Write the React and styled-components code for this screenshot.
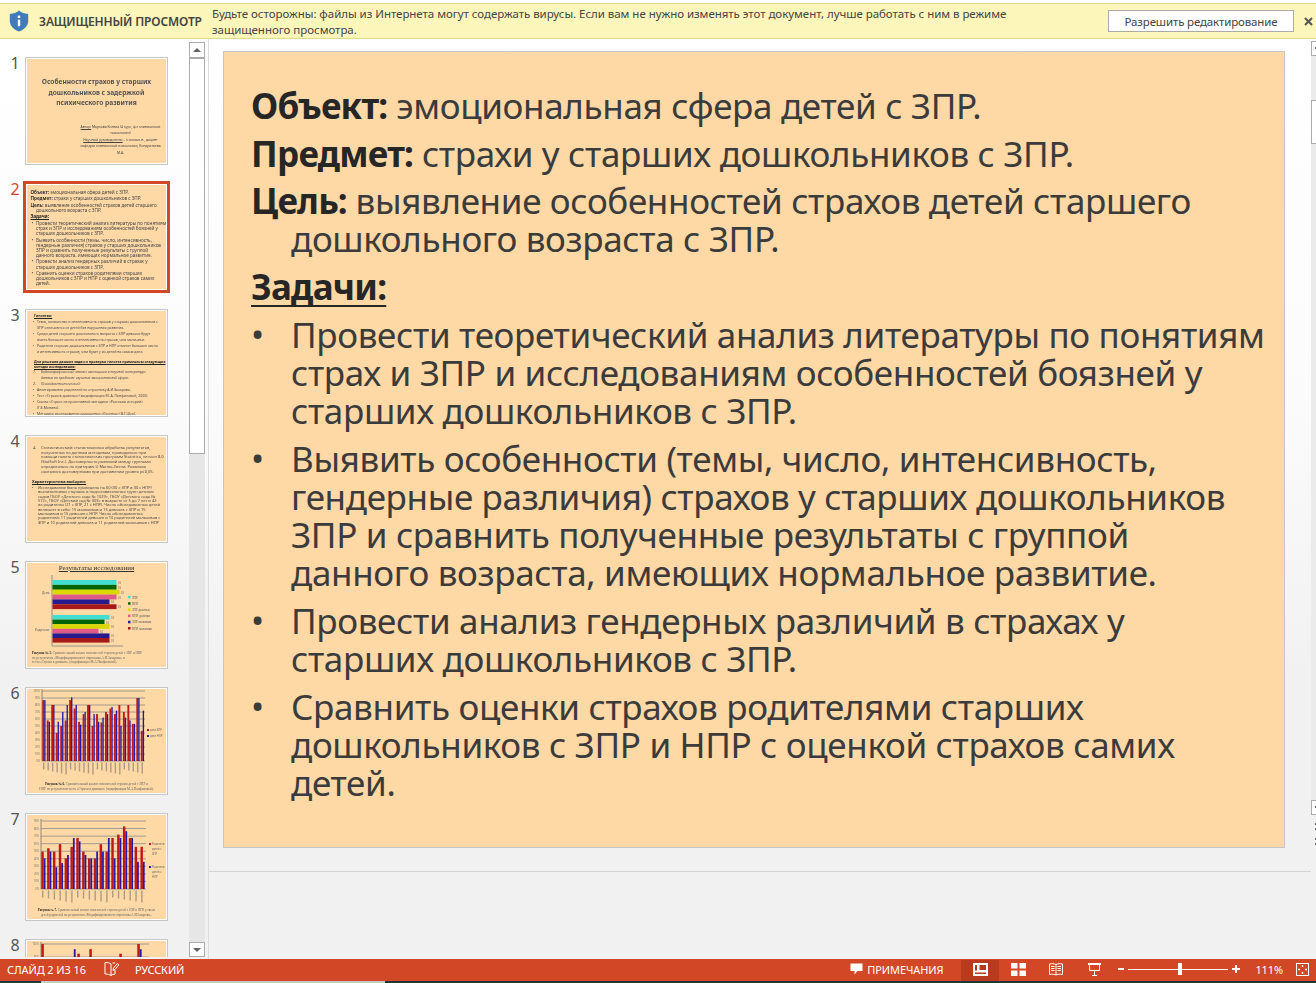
import React from "react";
import styled, { createGlobalStyle } from "styled-components";

const Global = createGlobalStyle`
  html, body { margin: 0; padding: 0; background: #fff; }
  * { box-sizing: border-box; }
  body { font-family: "Noto Sans", "Open Sans", sans-serif; overflow: hidden; }
`;

const Page = styled.div`
  width: 1316px;
  height: 983px;
  display: flex;
  flex-direction: column;
  overflow: hidden;
  background: #fff;
  padding-top: 3px;
`;

/* ---------- protected view notice ---------- */
const Notice = styled.div`
  flex: none;
  height: 36px;
  display: flex;
  align-items: center;
  background: #fdf6bb;
  border-top: 1px solid #e0d98b;
  border-bottom: 1px solid #e0d98b;
  padding-left: 9px;
  color: #444;
`;
const NoticeTitle = styled.div`
  font-size: 12px;
  font-weight: 600;
  color: #444;
  margin-left: 10px;
  width: 173px;
  white-space: nowrap;
  letter-spacing: -0.15px;
`;
const NoticeText = styled.div`
  font-size: 11.5px;
  line-height: 16px;
  width: 880px;
  padding-top: 2px;
  white-space: pre-line;
  letter-spacing: -0.04px;
  color: #444;
`;
const EditButton = styled.button`
  width: 186px;
  height: 22px;
  margin-left: 16px;
  background: #fff;
  border: 1px solid #aaa;
  color: #444;
  font-family: inherit;
  font-size: 11.5px;
  letter-spacing: -0.15px;
  padding: 1px 0 0;
`;
const CloseMark = styled.span`
  margin-left: 10px;
  display: flex;
`;

/* ---------- workspace ---------- */
const Workspace = styled.div`
  flex: 1;
  min-height: 0;
  display: flex;
  background: linear-gradient(180deg, #ffffff 0%, #fbfbfb 40%, #f1f1f1 70%, #f1f1f1 100%);
`;
const Sidebar = styled.div`
  flex: none;
  width: 209px;
  display: flex;
  padding-top: 3px;
  padding-right: 3px;
  padding-bottom: 2px;
  border-right: 1px solid #dcdcdc;
`;
const ThumbList = styled.div`
  flex: none;
  width: 189px;
  overflow: hidden;
  display: flex;
  flex-direction: column;
  gap: 18px;
  padding: 15px 0 0 0;
`;
const Scrollbar = styled.div`
  flex: none;
  width: 16px;
  display: flex;
  flex-direction: column;
  background: #e6e6e6;
`;
const ScrollButton = styled.div`
  flex: none;
  height: ${p => p.$h || 16}px;
  background: #fff;
  border: 1px solid #ababab;
  display: flex;
  align-items: center;
  justify-content: center;
  &::after {
    content: "";
    border-left: 4px solid transparent;
    border-right: 4px solid transparent;
    ${p => (p.$down ? "border-top: 4px solid #606060;" : "border-bottom: 4px solid #606060;")}
  }
`;
const ScrollThumb = styled.div`
  flex: none;
  height: ${p => p.$h}px;
  background: #fff;
  border: 1px solid #ababab;
`;
const ScrollFill = styled.div`
  flex: 1;
`;

const ThumbRow = styled.div`
  flex: none;
  display: flex;
  align-items: flex-start;
  height: 108px;
`;
const ThumbNum = styled.div`
  flex: none;
  width: ${p => (p.$active ? 23 : 25)}px;
  padding-left: 10.5px;
  margin-top: -2px;
  font-size: 16px;
  line-height: 17px;
  color: ${p => (p.$active ? "#d24726" : "#555")};
`;
const ThumbFrame = styled.div`
  flex: none;
  width: ${p => (p.$active ? 147 : 143)}px;
  height: ${p => (p.$active ? 112 : 108)}px;
  margin-top: ${p => (p.$active ? -2 : 0)}px;
  background: #fff;
  border: ${p => (p.$active ? "3px solid #d24726" : "1px solid #c6c6c6")};
  padding: 1px;
`;
const ThumbSlide = styled.div`
  width: 100%;
  height: 100%;
  background: #fed8a5;
  overflow: hidden;
  color: #4a4a4a;
  padding: ${p => p.$pad || "0"};
  filter: blur(0.35px);
`;
const TinyTitle = styled.div`
  margin: 18px 0 0;
  font-size: 6.6px;
  line-height: 10.5px;
  font-weight: 700;
  text-align: center;
  color: #555;
  white-space: pre;
`;
const TinyAuthor = styled.div`
  margin: 15px 2px 0 50px;
  font-size: 3.4px;
  line-height: 6.6px;
  text-align: center;
  color: #444;
  white-space: pre;
`;
const TinyBlock = styled.div`
  font-size: ${p => p.$size || 4.4}px;
  line-height: ${p => p.$lh || 5.1}px;
  color: #4a4a4a;
  letter-spacing: ${p => p.$ls || 0}px;
  white-space: pre;
`;
const TinyLine = styled.div`
  margin-top: ${p => p.$mt || 0}px;
  padding-left: ${p => p.$pl || 0}px;
  white-space: pre;
  b { color: #333; }
`;
const TinyHead = styled.div`
  font-weight: 700;
  text-decoration: underline;
  color: #222;
  white-space: pre;
  line-height: ${p => (p.$lh ? `${p.$lh}px` : "inherit")};
  margin-top: ${p => p.$mt || 0}px;
  margin-left: ${p => p.$ml || 0}px;
`;
const TinyItem = styled.div`
  position: relative;
  padding-left: ${p => p.$pl || 6}px;
  margin-top: ${p => p.$mt || 0}px;
  line-height: ${p => (p.$lh ? `${p.$lh}px` : "inherit")};
  font-style: ${p => (p.$it ? "italic" : "normal")};
  white-space: pre;
  &::before {
    content: "${p => p.$mark || "•"}";
    position: absolute;
    left: ${p => p.$ml || 1}px;
  }
`;
const ChartCaption = styled.div`
  font-family: "Liberation Serif", serif;
  font-size: ${p => p.$size || 3.5}px;
  line-height: ${p => p.$lh || 4.6}px;
  color: #666;
  white-space: pre;
  text-align: ${p => p.$align || "left"};
  padding: ${p => p.$pad || "0 8px"};
`;
const CaptionStrong = styled.span`
  font-weight: 700;
  color: #222;
`;
const ResultTitle = styled.div`
  font-family: "Liberation Serif", serif;
  font-size: 7px;
  line-height: 9px;
  padding-top: 1px;
  text-align: center;
  text-decoration: underline;
  color: #333;
`;
const ChartSvg = styled.svg`
  display: block;
`;

/* ---------- main slide ---------- */
const Stage = styled.div`
  flex: 1;
  min-width: 0;
  display: flex;
`;
const StageInner = styled.div`
  flex: 1;
  min-width: 0;
  padding: 12px 0 0 14px;
  display: flex;
  flex-direction: column;
`;
const SlideSheet = styled.div`
  flex: none;
  width: 1062px;
  height: 797px;
  background: #fed8a5;
  border: 1px solid #c6c6c6;
  padding: 35px 0 0 27px;
  color: #3b3b3b;
  font-size: 35px;
  line-height: 38.2px;
  letter-spacing: -0.34px;
`;
const Para = styled.div`
  padding-left: 40px;
  text-indent: -40px;
  margin-bottom: 9.4px;
  white-space: pre-line;
`;
const Strong = styled.b`
  font-weight: 700;
  color: #262626;
  letter-spacing: -0.75px;
`;
const Underlined = styled(Strong)`
  text-decoration: underline;
  text-decoration-thickness: 2px;
  text-underline-offset: 5px;
`;
const Bullet = styled.div`
  padding-left: 40px;
  margin-bottom: 9.5px;
  white-space: pre-line;
  position: relative;
  &::before {
    content: "•";
    position: absolute;
    left: 0;
    top: -1px;
  }
`;
const NotesPane = styled.div`
  margin-top: 23px;
  height: 0;
  border-top: 1px solid #d4d4d4;
  margin-left: -14px;
`;
const RightBar = styled.div`
  flex: none;
  width: 5px;
  padding-top: 2px;
  display: flex;
  flex-direction: column;
`;
const RightButton = styled.div`
  flex: none;
  height: 15px;
  background: #fff;
  border: 1px solid #ababab;
  border-right: none;
  &::after {
    content: "";
    display: block;
    width: 2px;
    height: 2px;
    background: #606060;
    margin: 5px 0 0 3px;
  }
`;
const RightTrack = styled.div`
  flex: none;
  height: ${p => p.$h}px;
  background: #ebebeb;
`;
const RightThumb = styled.div`
  flex: none;
  height: ${p => p.$h}px;
  background: #fff;
  border: 1px solid #ababab;
  border-right: none;
`;
const RightDots = styled.div`
  flex: none;
  margin: ${p => p.$mt}px 0 0 4px;
  width: 1px;
  height: 2px;
  background: #666;
  box-shadow: 0 5px 0 #666;
`;

/* ---------- status bar ---------- */
const StatusBar = styled.div`
  flex: none;
  height: 22px;
  background: #d24726;
  color: #fff;
  display: flex;
  align-items: center;
  font-size: 11px;
  letter-spacing: -0.1px;
`;
const StatusLabel = styled.span`
  margin-left: ${p => p.$ml || 0}px;
  padding-bottom: 2px;
  white-space: nowrap;
`;
const StatusIcon = styled.span`
  flex: none;
  display: flex;
  padding-bottom: ${p => (p.$flush ? 0 : 2)}px;
  margin-left: ${p => p.$ml || 0}px;
`;
const ViewButton = styled.div`
  flex: none;
  width: 38px;
  height: 21px;
  padding-bottom: 3px;
  display: flex;
  align-items: center;
  justify-content: center;
  background: ${p => (p.$active ? "#b83b1d" : "transparent")};
  margin-top: 1px;
`;
const ZoomMark = styled.span`
  flex: none;
  position: relative;
  width: ${p => p.$w}px;
  height: 2px;
  background: #fff;
  margin-top: -2px;
  margin-left: ${p => p.$ml || 0}px;
  ${p => p.$plus && `
    &::after {
      content: "";
      position: absolute;
      left: ${(p.$w - 2) / 2}px;
      top: -3px;
      width: 2px;
      height: 8px;
      background: #fff;
    }
  `}
`;
const ZoomTrack = styled.div`
  flex: none;
  position: relative;
  width: 100px;
  height: 1px;
  background: #fff;
  margin-top: -2px;
  margin-left: 4px;
`;
const ZoomKnob = styled.div`
  position: absolute;
  left: 50px;
  top: -6px;
  width: 4px;
  height: 12px;
  background: #fff;
`;
const BottomEdge = styled.div`
  flex: none;
  height: 2px;
  display: flex;
  background: #22343a;
`;
const EdgePart = styled.div`
  flex: none;
  width: ${p => p.$w}px;
  background: ${p => p.$c};
`;

/* ---------- drawings ---------- */
const Shield = () => (
  <svg width="20" height="22" viewBox="0 0 20 22">
    <path d="M10 0.5 C7.5 2.6 4.5 3.7 0.8 3.9 V10.5 C0.8 15.8 4.4 19.5 10 21.6 C15.6 19.5 19.2 15.8 19.2 10.5 V3.9 C15.5 3.7 12.5 2.6 10 0.5Z" fill="#3f7cba" />
    <rect x="8.8" y="5.6" width="2.4" height="2.4" fill="#fff" />
    <rect x="8.8" y="9.6" width="2.4" height="6.6" fill="#fff" />
  </svg>
);
const CloseIcon = () => (
  <svg width="9" height="9" viewBox="0 0 9 9">
    <path d="M1 1 L8 8 M8 1 L1 8" stroke="#555" strokeWidth="2" />
  </svg>
);
const NoteIcon = () => (
  <svg width="15" height="16" viewBox="0 0 15 16" fill="none" stroke="#fff" strokeWidth="1">
    <path d="M7 3 C5.5 1.8 3.5 1.5 1 1.5 V13 C3.5 13 5.5 13.4 7 14.5 V3Z" />
    <path d="M7 14.5 C8.2 13.6 9.4 13.2 11 13 V9" />
    <path d="M8.5 2 H11" />
    <path d="M9 9.5 L9.5 7 L13.3 2.5 L14.8 3.8 L11 8.5Z" />
  </svg>
);
const CommentIcon = () => (
  <svg width="13" height="12" viewBox="0 0 13 12">
    <path d="M0.5 0.5 H12.5 V8 H7.5 L4.5 11.5 V8 H0.5Z" fill="#fff" />
  </svg>
);
const NormalIcon = () => (
  <svg width="15" height="13" viewBox="0 0 15 13">
    <path d="M0 0 H15 V13 H0Z M6.5 2 V7 H13 V2Z M2 9.5 V11 H13 V9.5Z M2 2 V7.5 H4 V2Z" fill="#fff" fillRule="evenodd" />
  </svg>
);
const SorterIcon = () => (
  <svg width="15" height="13" viewBox="0 0 15 13" fill="#fff">
    <rect x="0" y="0" width="6.5" height="5.5" />
    <rect x="8.5" y="0" width="6.5" height="5.5" />
    <rect x="0" y="7.5" width="6.5" height="5.5" />
    <rect x="8.5" y="7.5" width="6.5" height="5.5" />
  </svg>
);
const ReadingIcon = () => (
  <svg width="14" height="13" viewBox="0 0 14 13" fill="none" stroke="#fff" strokeWidth="1">
    <path d="M0.5 1 C2.5 0.5 5 0.5 7 1.5 C9 0.5 11.5 0.5 13.5 1 V11.5 C11.5 11 9 11 7 12 C5 11 2.5 11 0.5 11.5Z" />
    <path d="M7 1.5 V12 M2 3.5 H5.5 M2 5.5 H5.5 M2 7.5 H5.5 M8.5 3.5 H12 M8.5 5.5 H12 M8.5 7.5 H12" />
  </svg>
);
const ShowIcon = () => (
  <svg width="13" height="13" viewBox="0 0 13 13" fill="none" stroke="#fff" strokeWidth="1">
    <path d="M0 1 H13" strokeWidth="2" />
    <path d="M1.5 1.5 V7.5 H11.5 V1.5" />
    <path d="M6.5 7.5 V12.5 M4 12.5 H9" />
  </svg>
);
const FitIcon = () => (
  <svg width="13" height="13" viewBox="0 0 13 13" fill="none" stroke="#fff" strokeWidth="1">
    <rect x="0.5" y="0.5" width="12" height="12" />
    <path d="M6.5 2 V4 M6.5 9 V11 M2 6.5 H4 M9 6.5 H11" strokeWidth="1.4" />
  </svg>
);

/* ---------- charts ---------- */
const BAR_COLORS = ["#40ddd0", "#006400", "#d9d900", "#e05a88", "#251b8f", "#a81818"];

const ResultsChart = () => {
  const top = [64, 64, 67, 64, 57, 64];
  const bottom = [57, 52, 57, 46, 57, 57];
  const legend = ["ЗПР", "НПР", "ЗПР девочки", "НПР девочки", "ЗПР мальчики", "НПР мальчики"];
  return (
    <ChartSvg width="139" height="78" viewBox="0 0 139 78">
      <path d="M25 2 V73 H96" stroke="#888" strokeWidth="0.9" fill="none" />
      {top.map((w, i) => (
        <g key={i}>
          <rect x="25.5" y={7 + i * 4.85} width={w} height="4.85" fill={BAR_COLORS[i]} />
          <text x={w + 27} y={11 + i * 4.85} fontSize="3" fill="#666" fontFamily="Liberation Serif">18</text>
        </g>
      ))}
      {bottom.map((w, i) => (
        <g key={i}>
          <rect x="25.5" y={42 + i * 4.6} width={w} height="4.6" fill={BAR_COLORS[i]} />
          <text x={w + 27} y={46 + i * 4.6} fontSize="3" fill="#666" fontFamily="Liberation Serif">18</text>
        </g>
      ))}
      <text x="15" y="21" fontSize="3.5" fill="#555" fontFamily="Liberation Serif">Дети</text>
      <text x="8" y="58" fontSize="3.5" fill="#555" fontFamily="Liberation Serif">Родители</text>
      {legend.map((t, i) => (
        <g key={t}>
          <rect x="101" y={23 + i * 6.2} width="2.5" height="2.5" fill={BAR_COLORS[i]} />
          <text x="105" y={25.5 + i * 6.2} fontSize="3.2" fill="#555" fontFamily="Liberation Serif">{t}</text>
        </g>
      ))}
    </ChartSvg>
  );
};

const BarChart = ({ red, blue, lines, left, top, right, bottom, height, legend, labels, unit = 10 }) => {
  const plotH = bottom - top;
  const step = (right - left) / red.length;
  return (
    <ChartSvg width="139" height={height} viewBox={`0 0 139 ${height}`}>
      {Array.from({ length: lines + 1 }).map((_, i) => (
        <line key={i} x1={left} x2={right} y1={top + (plotH * i) / lines} y2={top + (plotH * i) / lines} stroke="#8c8c8c" strokeWidth="0.8" />
      ))}
      {Array.from({ length: lines + 1 }).map((_, i) => (
        <text key={i} x={left - 2} y={bottom - (plotH * i) / lines + 1} fontSize="2.6" textAnchor="end" fill="#777">
          {`${i * unit}%`}
        </text>
      ))}
      <line x1={left} x2={left} y1={top - 2} y2={bottom} stroke="#777" strokeWidth="0.8" />
      {red.map((v, i) => (
        <g key={i}>
          <rect x={left + i * step + 0.3} y={bottom - (plotH * v) / 100} width={step * 0.42} height={(plotH * v) / 100} fill="#c01818" />
          <rect x={left + i * step + 0.3 + step * 0.42} y={bottom - (plotH * blue[i]) / 100} width={step * 0.3} height={(plotH * blue[i]) / 100} fill="#2418a8" />
          {labels && <rect x={left + i * step + 1} y={bottom + 1.5} width="1.4" height={7 + ((i * 7) % 6)} fill="#b09a80" />}
        </g>
      ))}
      {legend && legend.map((item, i) => (
        <g key={i}>
          <rect x={item.x} y={item.y - 2} width="2" height="2" fill={i ? "#2418a8" : "#b81818"} />
          {item.lines.map((t, j) => (
            <text key={j} x={item.x + 3} y={item.y + j * 5} fontSize="2.7" fill="#666">{t}</text>
          ))}
        </g>
      ))}
    </ChartSvg>
  );
};

const legendSix = [
  { x: 120, y: 42, lines: ["дети ЗПР"] },
  { x: 120, y: 48, lines: ["дети НПР"] },
];
const legendSeven = [
  { x: 122, y: 30, lines: ["Родители", "детей с", "ЗПР"] },
  { x: 122, y: 53, lines: ["Родители", "детей с", "НПР"] },
];

/* ---------- App ---------- */
export default function App() {
  return (
    <Page>
      <Global />
      <Notice>
        <Shield />
        <NoticeTitle>ЗАЩИЩЕННЫЙ ПРОСМОТР</NoticeTitle>
        <NoticeText>
          {"Будьте осторожны: файлы из Интернета могут содержать вирусы. Если вам не нужно изменять этот документ, лучше работать с ним в режиме\nзащищенного просмотра."}
        </NoticeText>
        <EditButton>Разрешить редактирование</EditButton>
        <CloseMark><CloseIcon /></CloseMark>
      </Notice>

      <Workspace>
        <Sidebar>
          <ThumbList>
            <ThumbRow>
              <ThumbNum>1</ThumbNum>
              <ThumbFrame>
                <ThumbSlide>
                  <TinyTitle>{"Особенности страхов у старших\nдошкольников с задержкой\nпсихического развития"}</TinyTitle>
                  <TinyAuthor>
                    <u>Автор:</u>{" Маркова Ксения (4 курс, ф-т клинической\nпсихологии)\n"}
                    <u>Научный руководитель:</u>{" – к.психол.н., доцент\nкафедры клинической психологии, Кондратьева\nМ.А."}
                  </TinyAuthor>
                </ThumbSlide>
              </ThumbFrame>
            </ThumbRow>

            <ThumbRow>
              <ThumbNum $active>2</ThumbNum>
              <ThumbFrame $active>
                <ThumbSlide $pad="5px 0 0 3.5px">
                  <TinyBlock $size={4.7} $lh={5.15} $ls={-0.046}>
                    <TinyLine><b>Объект:</b> эмоциональная сфера детей с ЗПР.</TinyLine>
                    <TinyLine $mt={1.25}><b>Предмет:</b> страхи у старших дошкольников с ЗПР.</TinyLine>
                    <TinyLine $mt={1.25}><b>Цель:</b> выявление особенностей страхов детей старшего</TinyLine>
                    <TinyLine $pl={5.4}>дошкольного возраста с ЗПР.</TinyLine>
                    <TinyHead $mt={1.25}>Задачи:</TinyHead>
                    <TinyItem $pl={5.4} $mt={1.25}>{"Провести теоретический анализ литературы по понятиям\nстрах и ЗПР и исследованиям особенностей боязней у\nстарших дошкольников с ЗПР."}</TinyItem>
                    <TinyItem $pl={5.4} $mt={1.25}>{"Выявить особенности (темы, число, интенсивность,\nгендерные различия) страхов у старших дошкольников\nЗПР и сравнить полученные результаты с группой\nданного возраста, имеющих нормальное развитие."}</TinyItem>
                    <TinyItem $pl={5.4} $mt={1.25}>{"Провести анализ гендерных различий в страхах у\nстарших дошкольников с ЗПР."}</TinyItem>
                    <TinyItem $pl={5.4} $mt={1.25}>{"Сравнить оценки страхов родителями старших\nдошкольников с ЗПР и НПР с оценкой страхов самих\nдетей."}</TinyItem>
                  </TinyBlock>
                </ThumbSlide>
              </ThumbFrame>
            </ThumbRow>

            <ThumbRow>
              <ThumbNum>3</ThumbNum>
              <ThumbFrame>
                <ThumbSlide $pad="2px 0 0 3px">
                  <TinyBlock $size={3.5} $lh={6}>
                    <TinyHead $ml={4}>Гипотезы:</TinyHead>
                    <TinyItem $pl={7} $ml={3}>{"Темы, количество и интенсивность страхов у старших дошкольников с\nЗПР отличаются от детей без нарушения развития."}</TinyItem>
                    <TinyItem $pl={7} $ml={3}>{"Среди детей старшего дошкольного возраста с ЗПР девочки будут\nиметь большее число и интенсивность страхов, чем мальчики."}</TinyItem>
                    <TinyItem $pl={7} $ml={3}>{"Родители старших дошкольников с ЗПР и НПР отметят большее число\nи интенсивность страхов, чем будет у их детей на самом деле."}</TinyItem>
                    <TinyHead $mt={4} $ml={4} $lh={5}>{"Для решения данных задач и проверки гипотез применены следующие\nметоды исследования:"}</TinyHead>
                    <TinyItem $it $mark="1." $pl={11} $ml={3}>{"Библиографический: анализ имеющихся в научной литературе\nданных по проблеме изучения эмоциональной сферы."}</TinyItem>
                    <TinyItem $it $mark="2." $pl={11} $ml={3}>Психодиагностический:</TinyItem>
                    <TinyItem $pl={7} $ml={3}>Анкетирование родителей по опроснику А.И.Захарова.</TinyItem>
                    <TinyItem $pl={7} $ml={3}>Тест «Страхи в домиках» (модификация М. А. Панфиловой, 2000).</TinyItem>
                    <TinyItem $pl={7} $ml={3}>{"Сказка «Страх» из проективной методики «Рассказы историй»\n(Г.Б.Монина)."}</TinyItem>
                    <TinyItem $pl={7} $ml={3}>Методика исследования самооценки «Лесенка» (В.Г.Щур).</TinyItem>
                  </TinyBlock>
                </ThumbSlide>
              </ThumbFrame>
            </ThumbRow>

            <ThumbRow>
              <ThumbNum>4</ThumbNum>
              <ThumbFrame>
                <ThumbSlide $pad="9px 0 0 3px">
                  <TinyBlock $size={4} $lh={4.7}>
                    <TinyItem $mark="4." $pl={11} $ml={3}>{"Статистический: статистическая обработка результатов,\nполученных по данным методикам, проводилась при\nпомощи пакета статистических программ Statistica, version 8.0\n(StatSoft Inc.). Достоверность различий между группами\nопределялась по критерию U Манна-Уитни. Различия\nсчитались достоверными при достижении уровня p≤0,05."}</TinyItem>
                    <TinyHead $mt={6} $ml={2}>Характеристика выборки:</TinyHead>
                    <TinyItem $pl={8} $ml={2} $mt={1} $lh={4.35}>{"Исследование было проведено на 60 (30 с ЗПР и 30 с НПР)\nвоспитанниках старших и подготовительных групп детских\nсадов ГБОУ «Детского сада № 1029», ГБОУ «Детского сада №\n572», ГБОУ «Детский сад № 303» в возрасте от 5 до 7 лет и 42\nих родителях (21 с ЗПР, 21 с НПР). Число обследованных детей\nвключает в себя: 15 мальчиков и 15 девочек с ЗПР и 15\nмальчиков и 15 девочек с НПР. Число обследованных\nродителей: 11 родителей девочек и 10 родителей мальчиков с\nЗПР и 10 родителей девочек и 11 родителей мальчиков с НПР"}</TinyItem>
                  </TinyBlock>
                </ThumbSlide>
              </ThumbFrame>
            </ThumbRow>

            <ThumbRow>
              <ThumbNum>5</ThumbNum>
              <ThumbFrame>
                <ThumbSlide>
                  <ResultTitle>Результаты исследования</ResultTitle>
                  <ResultsChart />
                  <ChartCaption $pad="0 0 0 5px" $size={3.3}><CaptionStrong>Рисунок № 5.</CaptionStrong>{" Сравнительный анализ показателей страхов детей с ЗПР и НПР\nпо результатам «Модифицированного опросника А.И.Захарова» и\nтеста «Страхи в домиках» (модификация М.А.Панфиловой)."}</ChartCaption>
                </ThumbSlide>
              </ThumbFrame>
            </ThumbRow>

            <ThumbRow>
              <ThumbNum>6</ThumbNum>
              <ThumbFrame>
                <ThumbSlide>
                  <BarChart
                    height={93}
                    left={15} right={118} top={2} bottom={72} lines={10}
                    legend={legendSix} labels
                    red={[87, 58, 80, 40, 50, 58, 87, 75, 56, 67, 80, 50, 67, 55, 70, 75, 67, 80, 70, 80, 53, 90, 43]}
                    blue={[87, 56, 80, 56, 70, 80, 91, 80, 52, 70, 80, 67, 56, 62, 67, 77, 72, 50, 62, 58, 53, 90, 72]}
                  />
                  <ChartCaption $pad="0 2px" $align="center" $lh={4.8} $size={3.3}><CaptionStrong>Рисунок № 6.</CaptionStrong>{" Сравнительный анализ показателей страхов детей с ЗПР и\nНПР по результатам теста «Страхи в домиках» (модификация М.А.Панфиловой)."}</ChartCaption>
                </ThumbSlide>
              </ThumbFrame>
            </ThumbRow>

            <ThumbRow>
              <ThumbNum>7</ThumbNum>
              <ThumbFrame>
                <ThumbSlide>
                  <BarChart
                    height={93}
                    left={14} right={119} top={6} bottom={74} lines={9}
                    legend={legendSeven} labels
                    red={[55, 60, 55, 66, 45, 62, 75, 55, 45, 45, 66, 55, 75, 80, 92, 75, 62, 62]}
                    blue={[45, 55, 32, 38, 50, 75, 70, 50, 45, 55, 55, 75, 45, 75, 85, 75, 40, 40]}
                  />
                  <ChartCaption $pad="0 2px" $align="center" $lh={4.6} $size={3.2}><CaptionStrong>Рисунок № 7.</CaptionStrong>{" Сравнительный анализ показателей страхов детей с ЗПР и НПР у своих\nдетей родителей по результатам «Модифицированного опросника А.И.Захарова»."}</ChartCaption>
                </ThumbSlide>
              </ThumbFrame>
            </ThumbRow>

            <ThumbRow>
              <ThumbNum>8</ThumbNum>
              <ThumbFrame>
                <ThumbSlide>
                  <BarChart
                    height={92}
                    left={14} right={122} top={3} bottom={68} lines={5} unit={20}
                    red={[100, 80, 60, 60, 60, 60, 85, 60, 92, 60, 80, 60, 60, 85, 80, 60, 100, 60]}
                    blue={[60, 60, 60, 60, 80, 92, 60, 60, 60, 60, 60, 60, 60, 60, 60, 60, 92, 60]}
                  />
                </ThumbSlide>
              </ThumbFrame>
            </ThumbRow>
          </ThumbList>
          <Scrollbar>
            <ScrollButton />
            <ScrollThumb $h={396} />
            <ScrollFill />
            <ScrollButton $down $h={15} />
          </Scrollbar>
        </Sidebar>

        <Stage>
          <StageInner>
            <SlideSheet>
              <Para><Strong>Объект:</Strong> эмоциональная сфера детей с ЗПР.</Para>
              <Para><Strong>Предмет:</Strong> страхи у старших дошкольников с ЗПР.</Para>
              <Para><Strong>Цель:</Strong> выявление особенностей страхов детей старшего{"\n"}дошкольного возраста с ЗПР.</Para>
              <Para><Underlined>Задачи:</Underlined></Para>
              <Bullet>{"Провести теоретический анализ литературы по понятиям\nстрах и ЗПР и исследованиям особенностей боязней у\nстарших дошкольников с ЗПР."}</Bullet>
              <Bullet>{"Выявить особенности (темы, число, интенсивность,\nгендерные различия) страхов у старших дошкольников\nЗПР и сравнить полученные результаты с группой\nданного возраста, имеющих нормальное развитие."}</Bullet>
              <Bullet>{"Провести анализ гендерных различий в страхах у\nстарших дошкольников с ЗПР."}</Bullet>
              <Bullet>{"Сравнить оценки страхов родителями старших\nдошкольников с ЗПР и НПР с оценкой страхов самих\nдетей."}</Bullet>
            </SlideSheet>
            <NotesPane />
          </StageInner>
          <RightBar>
            <RightButton />
            <RightTrack $h={44} />
            <RightThumb $h={44} />
            <RightTrack $h={656} />
            <RightButton />
            <RightDots $mt={8} />
            <RightDots $mt={13} />
          </RightBar>
        </Stage>
      </Workspace>

      <StatusBar>
        <StatusLabel $ml={7}>СЛАЙД 2 ИЗ 16</StatusLabel>
        <StatusIcon $ml={18}><NoteIcon /></StatusIcon>
        <StatusLabel $ml={16}>РУССКИЙ</StatusLabel>
        <StatusIcon $ml={666}><CommentIcon /></StatusIcon>
        <StatusLabel $ml={4}>ПРИМЕЧАНИЯ</StatusLabel>
        <StatusIcon $ml={18} $flush>
          <ViewButton $active><NormalIcon /></ViewButton>
          <ViewButton><SorterIcon /></ViewButton>
          <ViewButton><ReadingIcon /></ViewButton>
          <ViewButton><ShowIcon /></ViewButton>
        </StatusIcon>
        <ZoomMark $w={6} $ml={5} />
        <ZoomTrack><ZoomKnob /></ZoomTrack>
        <ZoomMark $w={8} $ml={4} $plus />
        <StatusLabel $ml={15}>111%</StatusLabel>
        <StatusIcon $ml={13}><FitIcon /></StatusIcon>
      </StatusBar>
      <BottomEdge>
        <EdgePart $w={41} $c="#1d3a40" />
        <EdgePart $w={344} $c="#c8c8c8" />
      </BottomEdge>
    </Page>
  );
}
